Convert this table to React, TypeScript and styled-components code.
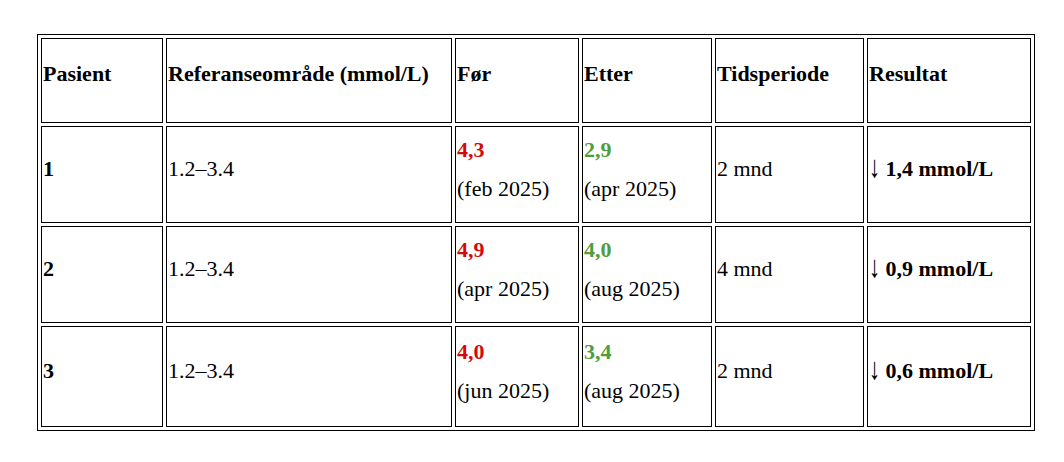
import styled, { createGlobalStyle } from "styled-components";

type Row = {
  patient: string;
  range: string;
  before: string;
  beforeDate: string;
  after: string;
  afterDate: string;
  period: string;
  result: string;
  height: number;
};

const columns = [
  { label: "Pasient", width: 122 },
  { label: "Referanseområde (mmol/L)", width: 286 },
  { label: "Før", width: 124 },
  { label: "Etter", width: 130 },
  { label: "Tidsperiode", width: 149 },
  { label: "Resultat", width: 164 },
];

const rows: Row[] = [
  {
    patient: "1",
    range: "1.2–3.4",
    before: "4,3",
    beforeDate: "(feb 2025)",
    after: "2,9",
    afterDate: "(apr 2025)",
    period: "2 mnd",
    result: "1,4 mmol/L",
    height: 97,
  },
  {
    patient: "2",
    range: "1.2–3.4",
    before: "4,9",
    beforeDate: "(apr 2025)",
    after: "4,0",
    afterDate: "(aug 2025)",
    period: "4 mnd",
    result: "0,9 mmol/L",
    height: 97,
  },
  {
    patient: "3",
    range: "1.2–3.4",
    before: "4,0",
    beforeDate: "(jun 2025)",
    after: "3,4",
    afterDate: "(aug 2025)",
    period: "2 mnd",
    result: "0,6 mmol/L",
    height: 101,
  },
];

const App = () => {
  return (
    <>
      <GlobalStyle />
      <Page>
        <Table>
          <thead>
            <HeadRow>
              {columns.map((col) => (
                <HeadCell key={col.label} width={col.width}>
                  {col.label}
                </HeadCell>
              ))}
            </HeadRow>
          </thead>
          <tbody>
            {rows.map((row) => (
              <BodyRow key={row.patient} height={row.height}>
                <Cell>
                  <strong>{row.patient}</strong>
                </Cell>
                <Cell>{row.range}</Cell>
                <Cell>
                  <Stack>
                    <Value tone="down">{row.before}</Value>
                    <span>{row.beforeDate}</span>
                  </Stack>
                </Cell>
                <Cell>
                  <Stack>
                    <Value tone="up">{row.after}</Value>
                    <span>{row.afterDate}</span>
                  </Stack>
                </Cell>
                <Cell>{row.period}</Cell>
                <Cell>
                  <strong>
                    <Arrow>↓</Arrow> {row.result}
                  </strong>
                </Cell>
              </BodyRow>
            ))}
          </tbody>
        </Table>
      </Page>
    </>
  );
};

const GlobalStyle = createGlobalStyle`
  body {
    margin: 0;
    background: #ffffff;
    color: #000000;
    font-family: "Liberation Serif", "Times New Roman", "DejaVu Serif", serif;
    font-size: 22px;
  }
`;

const Page = styled.div`
  padding: 34px 0 0 37px;
`;

const Table = styled.table`
  width: 998px;
  table-layout: fixed;
  border: 1px solid #000;
  border-collapse: separate;
  border-spacing: 3px;
`;

const HeadRow = styled.tr`
  height: 85px;
`;

const HeadCell = styled.th<{ width: number }>`
  box-sizing: border-box;
  width: ${({ width }) => width}px;
  border: 1px solid #000;
  padding: 1px 1px 15px;
  text-align: left;
  vertical-align: middle;
  font-weight: bold;
  white-space: nowrap;
`;

const BodyRow = styled.tr<{ height: number }>`
  height: ${({ height }) => height}px;
`;

const Cell = styled.td`
  box-sizing: border-box;
  border: 1px solid #000;
  padding: 1px 1px 13px;
  vertical-align: middle;
  white-space: nowrap;
`;

const Stack = styled.div`
  display: flex;
  flex-direction: column;
  line-height: 39px;
`;

const Value = styled.span<{ tone: "up" | "down" }>`
  font-weight: bold;
  color: ${({ tone }) => (tone === "down" ? "#d40b0b" : "#4f9e3c")};
`;

const Arrow = styled.span`
  display: inline-block;
  font-weight: normal;
  transform: scale(1.05, 1.4);
  transform-origin: 50% 70%;
`;

export default App;
